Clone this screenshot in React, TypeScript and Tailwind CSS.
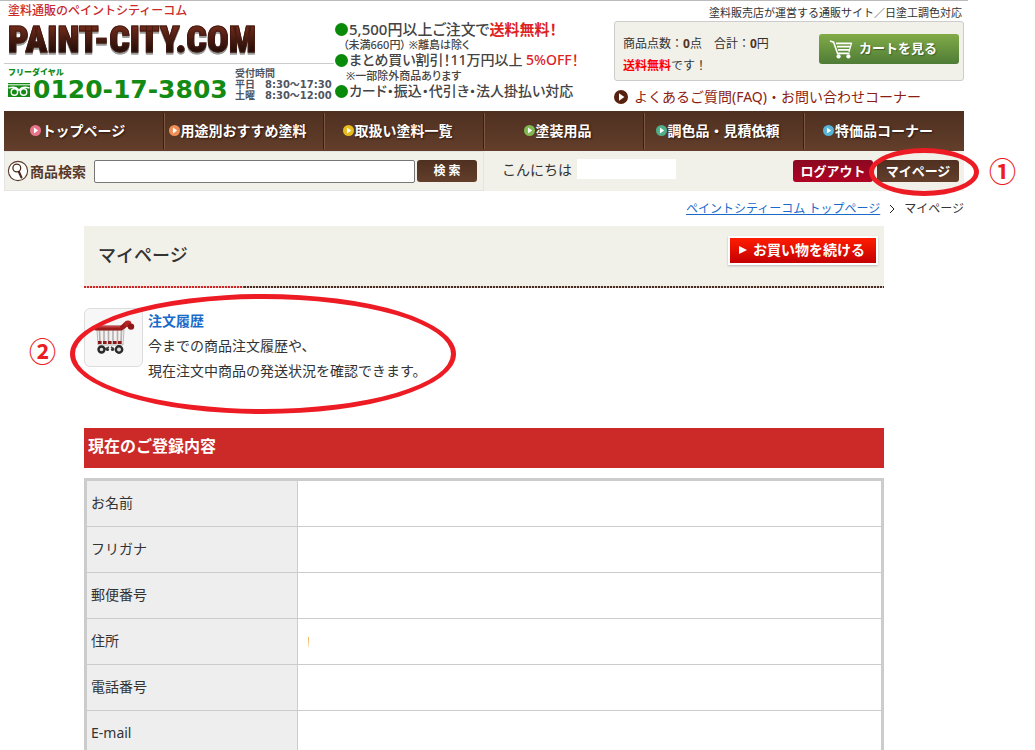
import React from "react";

const navItems = [
  { label: "トップページ", dot: "text-[#e8748a]" },
  { label: "用途別おすすめ塗料", dot: "text-[#ee8f56]" },
  { label: "取扱い塗料一覧", dot: "text-[#e6bd1c]" },
  { label: "塗装用品", dot: "text-[#7fb950]" },
  { label: "調色品・見積依頼", dot: "text-[#4fae8a]" },
  { label: "特価品コーナー", dot: "text-[#55b5d6]" },
];

const fields = ["お名前", "フリガナ", "郵便番号", "住所", "電話番号", "E-mail"];

function PlayDot({ className }: { className: string }) {
  return (
    <svg viewBox="0 0 14 14" className={`shrink-0 ${className}`} aria-hidden="true">
      <circle cx="7" cy="7" r="7" fill="currentColor" />
      <path d="M5 3.2 L10.4 7 L5 10.8 Z" fill="#fff" />
    </svg>
  );
}

function Bullet() {
  return <span className="size-[13px] shrink-0 rounded-full bg-[#0a8a0a]" />;
}

function FreeDialMark() {
  return (
    <svg viewBox="0 0 22 14" className="h-[14px] w-[22px] shrink-0" aria-hidden="true">
      <rect width="22" height="14" fill="#138a13" />
      <path d="M0 1.8 H22" stroke="#fff" strokeWidth="1" />
      <g fill="none" stroke="#fff" strokeWidth="1.4">
        <circle cx="6.4" cy="9" r="3.2" />
        <circle cx="15.6" cy="9" r="3.2" />
        <path d="M0.5 5 C5 3.6 9 4.4 11 7.4 C13 4.4 17 3.6 21.5 5" />
      </g>
    </svg>
  );
}

function CartIcon() {
  return (
    <svg viewBox="0 0 24 20" className="h-5 w-6 shrink-0" fill="none" stroke="#fff" aria-hidden="true">
      <path d="M1 2 L4.6 3.2 L8.6 14.4 H20.5" strokeWidth="1.6" />
      <path d="M7 4.4 H22.6 M8 7.6 H21.8 M9 10.8 H20.8" strokeWidth="1.7" />
      <path d="M22.6 3.8 L20 13" strokeWidth="1.2" />
      <circle cx="9.6" cy="17.4" r="2.1" fill="#fff" stroke="none" />
      <circle cx="19.4" cy="17.4" r="2.1" fill="#fff" stroke="none" />
    </svg>
  );
}

function SearchMark() {
  return (
    <svg viewBox="0 0 22 22" className="size-[22px] shrink-0" fill="none" aria-hidden="true">
      <circle cx="11" cy="11" r="9.6" fill="#fff" stroke="#5a3a2a" strokeWidth="1.1" />
      <circle cx="9.8" cy="8" r="3.9" stroke="#4a2b1c" strokeWidth="1.3" />
      <path d="M12 12 L14.4 17.4" stroke="#4a2b1c" strokeWidth="2.2" strokeLinecap="round" />
    </svg>
  );
}

function HistoryCart() {
  return (
    <svg viewBox="0 0 42 36" className="h-9 w-[42px]" aria-hidden="true">
      <path d="M4 10 H31 L30 25 H5 Z" fill="#f3f1f1" stroke="#aaa" strokeWidth="0.8" />
      <path d="M6.5 10 L7 24 M11 10 V24 M15.5 10 V24 M20 10 V24 M24.5 10 V24 M28.5 10 L28 24" stroke="#b5aeae" strokeWidth="1.6" />
      <path d="M5 22.5 H30" stroke="#8d1717" strokeWidth="3" strokeDasharray="3.6 1.4" />
      <path d="M3 8 H28 C31 7.4 31.5 4.6 34 3.6" fill="none" stroke="#9c1c1c" strokeWidth="5" strokeLinecap="round" strokeLinejoin="round" />
      <path d="M4 6.8 H27" stroke="#cf4c4c" strokeWidth="1.2" />
      <circle cx="35" cy="3.8" r="3.4" fill="#b52424" />
      <circle cx="38" cy="6.6" r="3.2" fill="#8f1717" />
      <path d="M12 29 L16 27 M21 29 L18 27" stroke="#444" strokeWidth="1.6" />
      <g fill="#ddd" stroke="#2a2a2a" strokeWidth="2.4">
        <circle cx="8.5" cy="29.5" r="3" />
        <circle cx="26" cy="29.5" r="3.2" />
      </g>
      <circle cx="14.5" cy="29.5" r="1.6" fill="#333" />
      <circle cx="19.5" cy="29.5" r="1.6" fill="#333" />
    </svg>
  );
}

function Header() {
  return (
    <header className="grid h-[110px] grid-cols-[330px_1fr_350px]">
      <div className="flex flex-col">
        <p className="mt-[3px] pl-1 text-[12px] leading-[14px] font-medium text-[#c92a2a]">塗料通販のペイントシティーコム</p>
        <a href="#top" className="block pl-1 drop-shadow-[0_2px_0_#999]">
          <span className="block bg-linear-to-b from-[#6e2a1a] from-20% to-[#1e0b07] to-80% bg-clip-text font-['Roboto_Condensed','Open_Sans_Condensed','Noto_Sans_Condensed','Roboto',sans-serif] text-[36px] leading-[45px] font-black whitespace-nowrap text-transparent [-webkit-text-stroke:1px_#431a10]">
            PAINT-CITY.COM
          </span>
        </a>
        <div className="flex border-t border-[#ccc] pl-1 pt-[3px]">
          <div className="w-[227px]">
            <p className="text-[8px] leading-[9px] font-black text-[#138a13]">フリーダイヤル</p>
            <p className="flex items-center gap-[3px] font-['DejaVu_Sans',sans-serif] text-[25px] leading-7 font-bold whitespace-nowrap text-[#138a13]">
              <FreeDialMark />
              0120-17-3803
            </p>
          </div>
          <p className="pt-px font-['DejaVu_Sans','Noto_Sans_CJK_JP',sans-serif] text-[10px] leading-[11px] font-bold whitespace-nowrap text-[#50555f]">
            受付時間
            <br />
            平日　8:30～17:30
            <br />
            土曜　8:30～12:00
          </p>
        </div>
      </div>

      <div className="flex flex-col pt-[19px] pl-px text-[14px] leading-[18px] font-medium whitespace-nowrap text-[#444] [font-feature-settings:'palt']">
        <p className="flex items-center gap-px text-[15px]">
          <Bullet />
          <span>
            5,500円以上ご注文で<b className="font-bold text-[#d22]">送料無料！</b>
          </span>
        </p>
        <p className="pl-2 text-[11px] leading-[13px]">（未満660円） ※離島は除く</p>
        <p className="flex items-center gap-px">
          <Bullet />
          <span>
            まとめ買い割引！11万円以上 <span className="text-[#d22]">5%OFF！</span>
          </span>
        </p>
        <p className="pl-[11px] text-[11px] leading-[13px]">※一部除外商品あります</p>
        <p className="flex items-center gap-px">
          <Bullet />
          <span>カード・振込・代引き・法人掛払い対応</span>
        </p>
      </div>

      <div className="flex flex-col">
        <p className="pt-[3px] pr-[2px] text-right text-[11px] leading-[17px]">塗料販売店が運営する通販サイト／日塗工調色対応</p>
        <div className="flex h-[60px] items-start justify-between rounded-[3px] border border-[#ccc] bg-[#f1f0e9] pr-1 pl-2">
          <p className="pt-[11px] text-[12px] leading-[22px]">
            商品点数：<b className="text-[#532]">0</b>点　合計：<b className="text-[#532]">0</b>円
            <br />
            <b className="text-[#f00]">送料無料</b>です！
          </p>
          <button className="mt-3 flex h-[30px] w-[140px] items-center gap-1.5 rounded-[3px] bg-linear-to-b from-[#82ab47] to-[#4f7c36] pb-px pl-2.5 text-[13px] font-bold text-white [text-shadow:1px_1px_1px_#3c5f28]">
            <CartIcon />
            カートを見る
          </button>
        </div>
        <a href="#faq" className="mt-1 flex items-center gap-1.5 text-[14px] leading-6 text-[#8b1d12]">
          <PlayDot className="size-[14px] text-[#57210f]" />
          よくあるご質問(FAQ)・お問い合わせコーナー
        </a>
      </div>
    </header>
  );
}

export default function App() {
  return (
    <div className="bg-white font-['Noto_Sans','Noto_Sans_CJK_JP',sans-serif] text-[14px] text-[#333]">
      <div className="ml-1 max-w-[960px]">
        <div className="-mr-1 -ml-1 h-px bg-[#bbb]" />
        <Header />

        <nav className="grid h-10 grid-cols-6 bg-linear-to-b from-[#4f3020] to-[#633e2b]">
          {navItems.map((item) => (
            <a
              key={item.label}
              href="#nav"
              className="my-0.5 flex items-center justify-center gap-px border-r border-[#39200f] pr-3 pb-0.5 text-[14px] font-bold whitespace-nowrap text-white shadow-[1px_0_0_#7a5643] [text-shadow:1px_1px_2px_#2c170c] last:border-r-0 last:shadow-none"
            >
              <PlayDot className={`size-[11px] ${item.dot}`} />
              {item.label}
            </a>
          ))}
        </nav>

        <div className="grid h-10 grid-cols-2 bg-[#f1f0e9]">
          <form className="flex items-center border border-[#e4e4e4] pl-[2px]" onSubmit={(e) => e.preventDefault()}>
            <SearchMark />
            <label htmlFor="keyword" className="ml-px w-16 font-bold whitespace-nowrap text-[#5a3a2a]">
              商品検索
            </label>
            <input id="keyword" type="text" className="h-[23px] min-w-0 flex-1 rounded-[2px] border border-[#767676] bg-white px-1" />
            <button className="mx-[2px] mr-[6px] h-[22px] w-[60px] rounded-[3px] bg-linear-to-b from-[#4f3020] to-[#633e2b] text-[12px] font-bold text-white">
              検 索
            </button>
          </form>
          <div className="flex items-center pr-[5px] pl-[18px]">
            <span className="pb-1">こんにちは</span>
            <span className="mb-1 ml-[5px] h-5 w-[99px] bg-white" />
            <button className="mr-1 ml-auto h-[22px] w-20 rounded-[3px] bg-linear-to-b from-[#8a0820] to-[#b00324] text-[13px] leading-[22px] font-bold whitespace-nowrap text-white">
              ログアウト
            </button>
            <div className="relative">
              <button className="block h-[22px] w-[82px] rounded-[3px] bg-linear-to-b from-[#4f3020] to-[#633e2b] text-[13px] leading-[22px] font-bold whitespace-nowrap text-white">
                マイページ
              </button>
              <div className="pointer-events-none absolute -top-[12px] -left-[8px] h-[48px] w-[110px] rounded-[50%] border-5 border-[#ed1c24]" />
              <span className="absolute -top-[6px] left-[112px] text-[27px] leading-9 font-bold text-[#ed1c24]">①</span>
            </div>
          </div>
        </div>

        <p className="mt-[7px] flex h-[22px] items-center justify-end gap-[9px] text-[12px]">
          <a href="#top" className="text-[#1a6bc9] underline">
            ペイントシティーコム トップページ
          </a>
          <svg viewBox="0 0 6 10" className="h-2.5 w-1.5" fill="none" stroke="#222" aria-hidden="true">
            <path d="M1 1 L5 5 L1 9" />
          </svg>
          <span>マイページ</span>
        </p>

        <main className="px-20 pt-1.5">
          <div className="flex h-[60px] items-start justify-between bg-[#f1f0e9] pr-1.5 pl-[14px]">
            <h1 className="text-[18px] leading-[58px] font-medium">マイページ</h1>
            <button className="mt-2.5 flex h-[29px] w-[150px] items-center justify-center gap-1.5 border-2 border-white bg-linear-to-b from-[#ff1c00] to-[#c40000] pr-0.5 pb-0.5 text-[14px] font-bold whitespace-nowrap text-white shadow-[0_1px_2px_#bbb]">
              <svg viewBox="0 0 8 8" className="size-2" fill="#fff" aria-hidden="true">
                <path d="M0 0 L8 4 L0 8 Z" />
              </svg>
              お買い物を続ける
            </button>
          </div>
          <div className="flex h-0.5">
            <div className="w-1/5 bg-[repeating-linear-gradient(90deg,#cc2828_0_2px,#f3c9c5_2px_3px)]" />
            <div className="flex-1 bg-[repeating-linear-gradient(90deg,#4a2b20_0_2px,#d6cdc8_2px_3px)]" />
          </div>

          <section className="relative mt-5 flex h-[120px] items-start">
            <div className="flex size-[59px] items-center justify-center rounded-md border border-[#ddd] bg-[#f7f7f7]">
              <HistoryCart />
            </div>
            <div className="ml-[5px] leading-[25px]">
              <a href="#history" className="font-bold text-[#1a6bc9]">
                注文履歴
              </a>
              <p>今までの商品注文履歴や、</p>
              <p>現在注文中商品の発送状況を確認できます。</p>
            </div>
            <div className="pointer-events-none absolute -top-[14px] -left-[14px] h-[120px] w-[386px] rounded-[50%] border-5 border-[#ed1c24]" />
            <span className="absolute top-[26px] -left-[55px] text-[27px] leading-9 font-bold text-[#ed1c24]">②</span>
          </section>

          <h2 className="h-10 bg-[#cc2a28] pl-1 text-[16px] leading-9 font-bold text-white">現在のご登録内容</h2>
          <div className="mt-2.5 border-3 border-[#ccc]">
            <table className="w-full table-fixed border-separate border-spacing-0">
              <tbody>
                {fields.map((field) => (
                  <tr key={field} className="h-[46px]">
                    <th scope="row" className="w-[211px] border-r border-b border-[#ccc] bg-[#eee] p-0 pb-0.5 pl-1 text-left font-normal">
                      {field}
                    </th>
                    <td className="border-b border-[#ccc] p-0 pl-2.5">
                      {field === "住所" && <div className="h-2.5 w-px bg-linear-to-b from-[#f0b050] to-[#fbe3bd]" />}
                    </td>
                  </tr>
                ))}
              </tbody>
            </table>
          </div>
        </main>
      </div>
    </div>
  );
}
